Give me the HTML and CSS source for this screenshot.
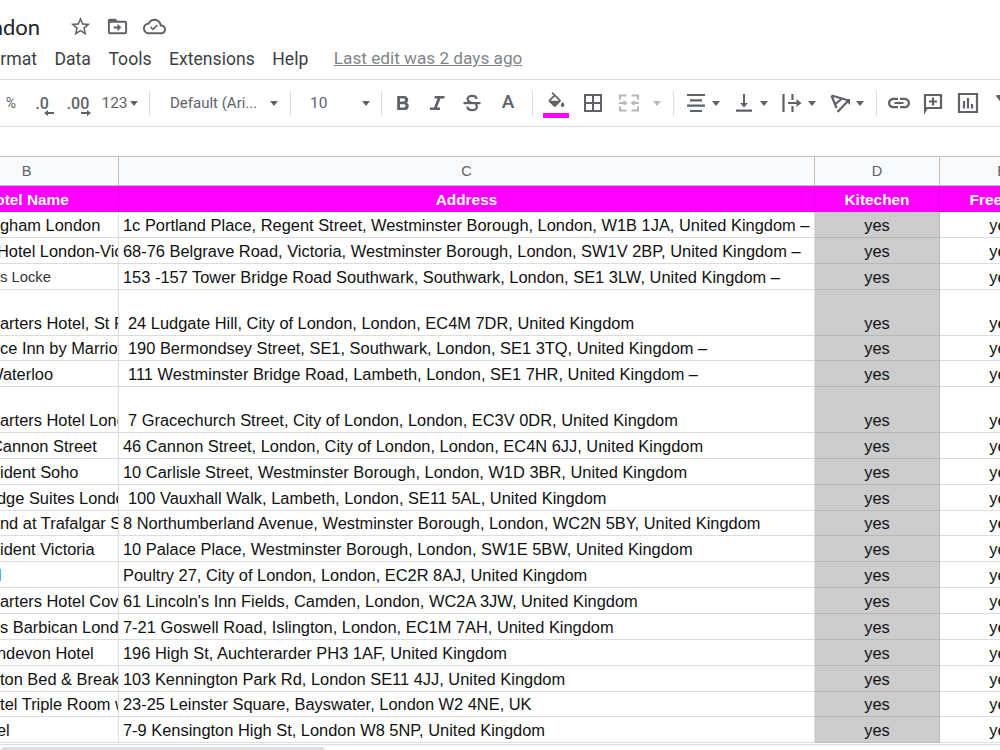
FILE: index.html
```
<!DOCTYPE html>
<html lang="en">
<head>
    <meta charset="utf-8">
    <link rel="stylesheet" href="styles.css">
    <title>London</title>
</head>
<body>
    <header>
        <div class="title-row">
            <div class="doc-title">London</div>
            <svg class="doc-icon" viewBox="0 0 24 24"><path d="M22 9.24l-7.19-.62L12 2 9.19 8.63 2 9.24l5.46 4.73L5.82 21 12 17.27 18.18 21l-1.63-7.03L22 9.24zM12 15.4l-3.76 2.27 1-4.28-3.32-2.88 4.38-.38L12 6.1l1.71 4.04 4.38.38-3.32 2.88 1 4.28L12 15.4z"/></svg>
            <svg class="doc-icon" viewBox="0 0 24 24"><path d="M20 6h-8l-2-2H4c-1.1 0-2 .9-2 2v12c0 1.100.9 2 2 2h16c1.100 0 2-.9 2-2V8c0-1.100-.9-2-2-2zm0 12H4V8h16v10zm-8-1l4-4-4-4v3H8v2h4z"/></svg>
            <svg class="doc-icon" viewBox="0 0 24 24"><path d="M19.350 10.040C18.670 6.590 15.640 4 12 4 9.110 4 6.600 5.640 5.350 8.040 2.340 8.360 0 10.910 0 14c0 3.310 2.690 6 6 6h13c2.760 0 5-2.240 5-5 0-2.640-2.050-4.780-4.650-4.960zM19 18H6c-2.210 0-4-1.790-4-4 0-2.050 1.530-3.760 3.560-3.970l1.070-.11.5-.95C8.080 7.140 9.940 6 12 6c2.620 0 4.880 1.860 5.390 4.430l.3 1.500 1.530.11c1.560.1 2.780 1.410 2.780 2.960 0 1.650-1.350 3-3 3z"/><path d="M8.500 11.800l2 2 4-4 1.200 1.200-5.200 5.200-3.200-3.200z"/></svg>
        </div>
        <nav>
            <span class="format">Format</span>
            <span>Data</span>
            <span>Tools</span>
            <span>Extensions</span>
            <span>Help</span>
            <span class="last-edit">Last edit was 2 days ago</span>
        </nav>
    </header>

    <div class="toolbar">
        <div class="tool percent">%</div>
        <div class="tool decimal">.0
            <svg class="dec-arrow" viewBox="0 0 10 6"><path d="M0 3l4-3v2h6v2H4v2z"/></svg>
        </div>
        <div class="tool decimal">.00
            <svg class="dec-arrow" viewBox="0 0 10 6"><path d="M10 3L6 0v2H0v2h6v2z"/></svg>
        </div>
        <div class="tool more">123<i class="arrow"></i></div>
        <div class="tool"><i class="sep"></i></div>
        <div class="tool select">Default (Ari...<i class="arrow"></i></div>
        <div class="tool"><i class="sep"></i></div>
        <div class="tool select size">10<i class="arrow"></i></div>
        <div class="tool"><i class="sep"></i></div>
        <div class="tool"><svg class="icon" viewBox="0 0 24 24"><path d="M15.600 11.790c.97-.67 1.650-1.770 1.650-2.790 0-2.260-1.750-4-4-4H6.200v14h7.840c2.090 0 3.710-1.700 3.710-3.790 0-1.520-.86-2.820-2.150-3.420zM9 7.500h3.500c.83 0 1.500.67 1.500 1.500s-.67 1.500-1.500 1.500H9v-3zm4 9H9v-3.300h4c.83 0 1.500.67 1.500 1.500s-.67 1.800-1.500 1.800z"/></svg></div>
        <div class="tool"><svg class="icon" viewBox="0 0 24 24"><path d="M9.500 5v2.500h3L9 16.500H5V19h10v-2.500h-3l3.500-9h4V5z"/></svg></div>
        <div class="tool"><svg class="icon" viewBox="0 0 24 24"><path d="M3.500 11h17v2.200h-17z"/><path class="line" d="M16.500 8c0-4-9-4.300-9 .1 0 2 1.500 3 4.500 3.900M7.300 15.500c0 5 9.600 4.600 9.600.3 0-1.200-.6-2.200-1.500-2.800"/></svg></div>
        <div class="tool text-color">A</div>
        <div class="tool"><i class="sep"></i></div>
        <div class="tool fill">
            <svg class="icon" viewBox="0 0 24 24"><path d="M16.560 8.940L7.620 0 6.210 1.410l2.380 2.380-5.150 5.150c-.59.59-.59 1.540 0 2.120l5.500 5.500c.29.29.68.44 1.060.44s.77-.15 1.060-.44l5.500-5.500c.59-.58.59-1.530 0-2.120zM5.210 10L10 5.210 14.790 10H5.210zM19 11.500s-2 2.170-2 3.500c0 1.100.9 2 2 2s2-.9 2-2c0-1.330-2-3.500-2-3.500z"/></svg>
        </div>
        <div class="tool"><svg class="icon" viewBox="0 0 24 24"><path d="M3 3v18h18V3H3zm8 16H5v-6h6v6zm0-8H5V5h6v6zm8 8h-6v-6h6v6zm0-8h-6V5h6v6z"/></svg></div>
        <div class="tool disabled"><svg class="icon" viewBox="0 0 24 24"><path class="line" d="M3 8.500V4.500h6.500M14.500 4.500H21v4M3 15.500v4h6.500M14.500 19.500H21v-4M2 12h5M17 12h5"/><path d="M6.500 9l4 3-4 3zM17.500 9l-4 3 4 3z"/></svg></div>
        <div class="tool disabled"><i class="arrow"></i></div>
        <div class="tool"><i class="sep"></i></div>
        <div class="tool"><svg class="icon" viewBox="0 0 24 24"><path class="line" d="M3 4h18M6 9.300h12M3 14.600h18M6 20h12"/></svg><i class="arrow"></i></div>
        <div class="tool"><svg class="icon" viewBox="0 0 24 24"><path d="M16 12h-3V3h-2v9H8l4 4.500zM4 18.500v2.200h16v-2.200z"/></svg><i class="arrow"></i></div>
        <div class="tool"><svg class="icon" viewBox="0 0 24 24"><path class="line" d="M3.500 3v18M12.500 3v6M12.500 15v6M8 12h10"/><path d="M16.500 8l5 4-5 4z"/></svg><i class="arrow"></i></div>
        <div class="tool"><svg class="icon" viewBox="0 0 24 24"><path class="line" d="M3.500 4.500l14 4M3.500 4.500l5 12.500M14 7.500L7.500 13M9.500 21L20 10"/><path d="M22 8v6l-6-6z"/></svg><i class="arrow"></i></div>
        <div class="tool"><i class="sep"></i></div>
        <div class="tool"><svg class="icon" viewBox="0 0 24 24"><path d="M3.200 12c0-1.710 1.390-3.100 3.100-3.100H11V6.700H6.300C3.370 6.700 1 9.070 1 12s2.370 5.300 5.300 5.300H11v-2.200H6.300c-1.710 0-3.100-1.390-3.100-3.100zM7.500 13.100h9v-2.200h-9v2.200zM17.700 6.700H13v2.200h4.700c1.710 0 3.100 1.390 3.100 3.100s-1.390 3.100-3.100 3.100H13v2.200h4.700c2.930 0 5.300-2.370 5.300-5.300s-2.370-5.300-5.300-5.300z"/></svg></div>
        <div class="tool"><svg class="icon" viewBox="0 0 24 24"><path class="line" d="M4 20V4h16v13H6z"/><path class="line" d="M12 6.500v8M8 10.500h8"/></svg></div>
        <div class="tool"><svg class="icon" viewBox="0 0 24 24"><path class="line" d="M3 3h18v18H3zM8 10v7.500M12 7v10.500M16 13v4.500"/></svg></div>
        <div class="tool"><svg class="icon" viewBox="0 0 24 24"><path d="M4.250 5.610C6.270 8.200 10 13 10 13v6c0 .55.45 1 1 1h2c.55 0 1-.45 1-1v-6s3.720-4.800 5.740-7.390A1 1 0 0 0 18.950 4H5.040a1 1 0 0 0-.79 1.610z"/></svg></div>
    </div>

    <div class="sheet">
        <div class="row letters"><div>B</div><div>C</div><div>D</div><div>E</div></div>
        <div class="row heading"><div>Hotel Name</div><div>Address</div><div>Kitechen</div><div>Free Wifi</div></div>
        <div class="row"><div>gham London</div><div>1c Portland Place, Regent Street, Westminster Borough, London, W1B 1JA, United Kingdom –</div><div>yes</div><div>yes</div></div>
        <div class="row"><div class="cut">Hotel London-Victoria</div><div>68-76 Belgrave Road, Victoria, Westminster Borough, London, SW1V 2BP, United Kingdom –</div><div>yes</div><div>yes</div></div>
        <div class="row"><div class="small">s Locke</div><div>153 -157 Tower Bridge Road Southwark, Southwark, London, SE1 3LW, United Kingdom –</div><div>yes</div><div>yes</div></div>
        <div class="row tall"><div>arters Hotel, St Paul's</div><div class="indent">24 Ludgate Hill, City of London, London, EC4M 7DR, United Kingdom</div><div>yes</div><div>yes</div></div>
        <div class="row"><div>ce Inn by Marriott</div><div class="indent">190 Bermondsey Street, SE1, Southwark, London, SE1 3TQ, United Kingdom –</div><div>yes</div><div>yes</div></div>
        <div class="row"><div class="cut-most">Waterloo</div><div class="indent">111 Westminster Bridge Road, Lambeth, London, SE1 7HR, United Kingdom –</div><div>yes</div><div>yes</div></div>
        <div class="row tall"><div>arters Hotel London</div><div class="indent">7 Gracechurch Street, City of London, London, EC3V 0DR, United Kingdom</div><div>yes</div><div>yes</div></div>
        <div class="row"><div class="cut-more">Cannon Street</div><div>46 Cannon Street, London, City of London, London, EC4N 6JJ, United Kingdom</div><div>yes</div><div>yes</div></div>
        <div class="row"><div>ident Soho</div><div>10 Carlisle Street, Westminster Borough, London, W1D 3BR, United Kingdom</div><div>yes</div><div>yes</div></div>
        <div class="row"><div class="cut">dge Suites London</div><div class="indent">100 Vauxhall Walk, Lambeth, London, SE11 5AL, United Kingdom</div><div>yes</div><div>yes</div></div>
        <div class="row"><div>nd at Trafalgar Square</div><div>8 Northumberland Avenue, Westminster Borough, London, WC2N 5BY, United Kingdom</div><div>yes</div><div>yes</div></div>
        <div class="row"><div>ident Victoria</div><div>10 Palace Place, Westminster Borough, London, SW1E 5BW, United Kingdom</div><div>yes</div><div>yes</div></div>
        <div class="row"><div class="link">l</div><div>Poultry 27, City of London, London, EC2R 8AJ, United Kingdom</div><div>yes</div><div>yes</div></div>
        <div class="row"><div>arters Hotel Covent</div><div>61 Lincoln's Inn Fields, Camden, London, WC2A 3JW, United Kingdom</div><div>yes</div><div>yes</div></div>
        <div class="row"><div>s Barbican London</div><div>7-21 Goswell Road, Islington, London, EC1M 7AH, United Kingdom</div><div>yes</div><div>yes</div></div>
        <div class="row"><div class="cut">ndevon Hotel</div><div>196 High St, Auchterarder PH3 1AF, United Kingdom</div><div>yes</div><div>yes</div></div>
        <div class="row"><div>ton Bed &amp; Breakfast</div><div>103 Kennington Park Rd, London SE11 4JJ, United Kingdom</div><div>yes</div><div>yes</div></div>
        <div class="row"><div class="cut-more">otel Triple Room with</div><div>23-25 Leinster Square, Bayswater, London W2 4NE, UK</div><div>yes</div><div>yes</div></div>
        <div class="row"><div class="cut">el</div><div>7-9 Kensington High St, London W8 5NP, United Kingdom</div><div>yes</div><div>yes</div></div>
    </div>
    <div class="scrollbar"><div class="thumb"></div></div>
</body>
</html>
```
FILE: styles.css
```
* {
    box-sizing: border-box;
}

body {
    margin: 0;
    height: 750px;
    overflow: hidden;
    background: #fff;
    font-family: Roboto, sans-serif;
    color: #3c4043;
}

header {
    height: 79px;
}

.title-row {
    display: flex;
    align-items: center;
    height: 52px;
    gap: 14px;
}

.doc-title {
    display: flex;
    justify-content: flex-end;
    width: 40px;
    margin-right: 15px;
    font-family: Lato, sans-serif;
    font-size: 22px;
    color: #202124;
}

.doc-icon {
    width: 23px;
    height: 23px;
    fill: #5f6368;
}

nav {
    display: flex;
    height: 15px;
    line-height: 14px;
    font-size: 17.6px;
    white-space: nowrap;
    gap: 17.5px;
}

.format {
    display: flex;
    justify-content: flex-end;
    width: 37px;
}

.last-edit {
    margin-left: 8px;
    line-height: 12px;
    font-size: 17.2px;
    color: #80868b;
    text-decoration: underline;
}

.toolbar {
    display: grid;
    grid-template-columns: 22px 44px 26px 55px 5px 136px 4px 87px 4px 40px 28px 42px 30px 18px 30px 44px 28px 28px 5px 51px 46px 49px 47px 15px 30px 38px 32px 40px;
    height: 48px;
    border-top: 1px solid #dadce0;
    border-bottom: 1px solid #dadce0;
    color: #5f6368;
    font-size: 15.5px;
    overflow: hidden;
}

.tool {
    display: flex;
    align-items: center;
    justify-content: center;
    gap: 4px;
    white-space: nowrap;
}

.icon {
    flex: none;
    width: 24px;
    height: 24px;
    fill: #5f6368;
}

.line {
    fill: none;
    stroke: #5f6368;
    stroke-width: 2.2;
}

.percent {
    font-size: 14px;
}

.decimal {
    position: relative;
    padding-right: 4px;
    font-size: 16px;
    font-weight: 500;
}

.decimal + .decimal {
    padding-right: 2px;
}

.dec-arrow {
    position: absolute;
    right: 12px;
    bottom: 10px;
    width: 10px;
    height: 6px;
    fill: #5f6368;
}

.decimal + .decimal .dec-arrow {
    right: 1px;
}

.more {
    gap: 2px;
    font-size: 15.5px;
}

.select {
    justify-content: space-between;
    padding: 0 10px 0 18px;
    font-size: 15px;
}

.size {
    padding-right: 9px;
    font-size: 15.5px;
}

.arrow {
    flex: none;
    border: 4.5px solid transparent;
    border-top: 5px solid #5f6368;
    border-bottom: 0;
}

.sep {
    width: 1px;
    height: 25px;
    background: #dadce0;
}

.text-color {
    padding-bottom: 4px;
    font-size: 19px;
    font-weight: 500;
}

.fill {
    flex-direction: column;
    gap: 0;
    padding-top: 4px;
}

.fill .icon {
    width: 21px;
    height: 21px;
}

.fill::after {
    content: "";
    width: 26px;
    height: 5px;
    background: #f0f;
}

.disabled {
    opacity: 0.45;
}

/* column B starts off the left edge */
.sheet {
    width: 1065px;
    margin: 29px 0 0 -65px;
    border-top: 1px solid #c0c0c0;
    font-family: "Liberation Sans", Arial, sans-serif;
    font-size: 16.41px;
    color: #111;
}

.row {
    display: grid;
    grid-template-columns: 184px 696px 125px 125px;
    height: 25.86px;
}

.row div {
    display: flex;
    align-items: flex-end;
    padding: 0 0 2px 4px;
    line-height: 19px;
    white-space: pre;
    overflow: hidden;
    border-right: 1px solid #dcdcdc;
    border-bottom: 1px solid #dcdcdc;
}

.row div:first-child {
    padding-left: 65px;
}

.row div:nth-child(n+3) {
    justify-content: center;
    padding-left: 0;
}

.row div:nth-child(3) {
    background: #ccc;
    border-color: #b7b7b7;
}

.tall {
    height: 45.7px;
}

.row.letters {
    height: 29.4px;
}

.row.letters div,
.row.heading div {
    justify-content: center;
    padding-left: 0;
}

.row.letters div {
    align-items: center;
    padding-bottom: 0;
    background: #f8f9fa;
    border-color: #c0c0c0;
    color: #5f6368;
    font-size: 14.5px;
}

.row.heading div {
    background: #f0f;
    border-color: #e600e6;
    color: #fff;
    font-weight: bold;
    font-size: 15.4px;
}

.row .indent {
    padding-left: 9px;
}

.row .small {
    font-size: 14.8px;
    color: #333;
}

.row .cut {
    text-indent: -3px;
}

.row .cut-more {
    text-indent: -9px;
}

.row .cut-most {
    text-indent: -12px;
}

.row .link {
    color: #2a8be0;
    text-indent: -2px;
}

.scrollbar {
    height: 8px;
    margin-top: 1px;
    padding-top: 2px;
    border-top: 1px solid #dadce0;
}

.thumb {
    width: 326px;
    height: 10px;
    border-radius: 5px;
    background: #dadce0;
}
```
